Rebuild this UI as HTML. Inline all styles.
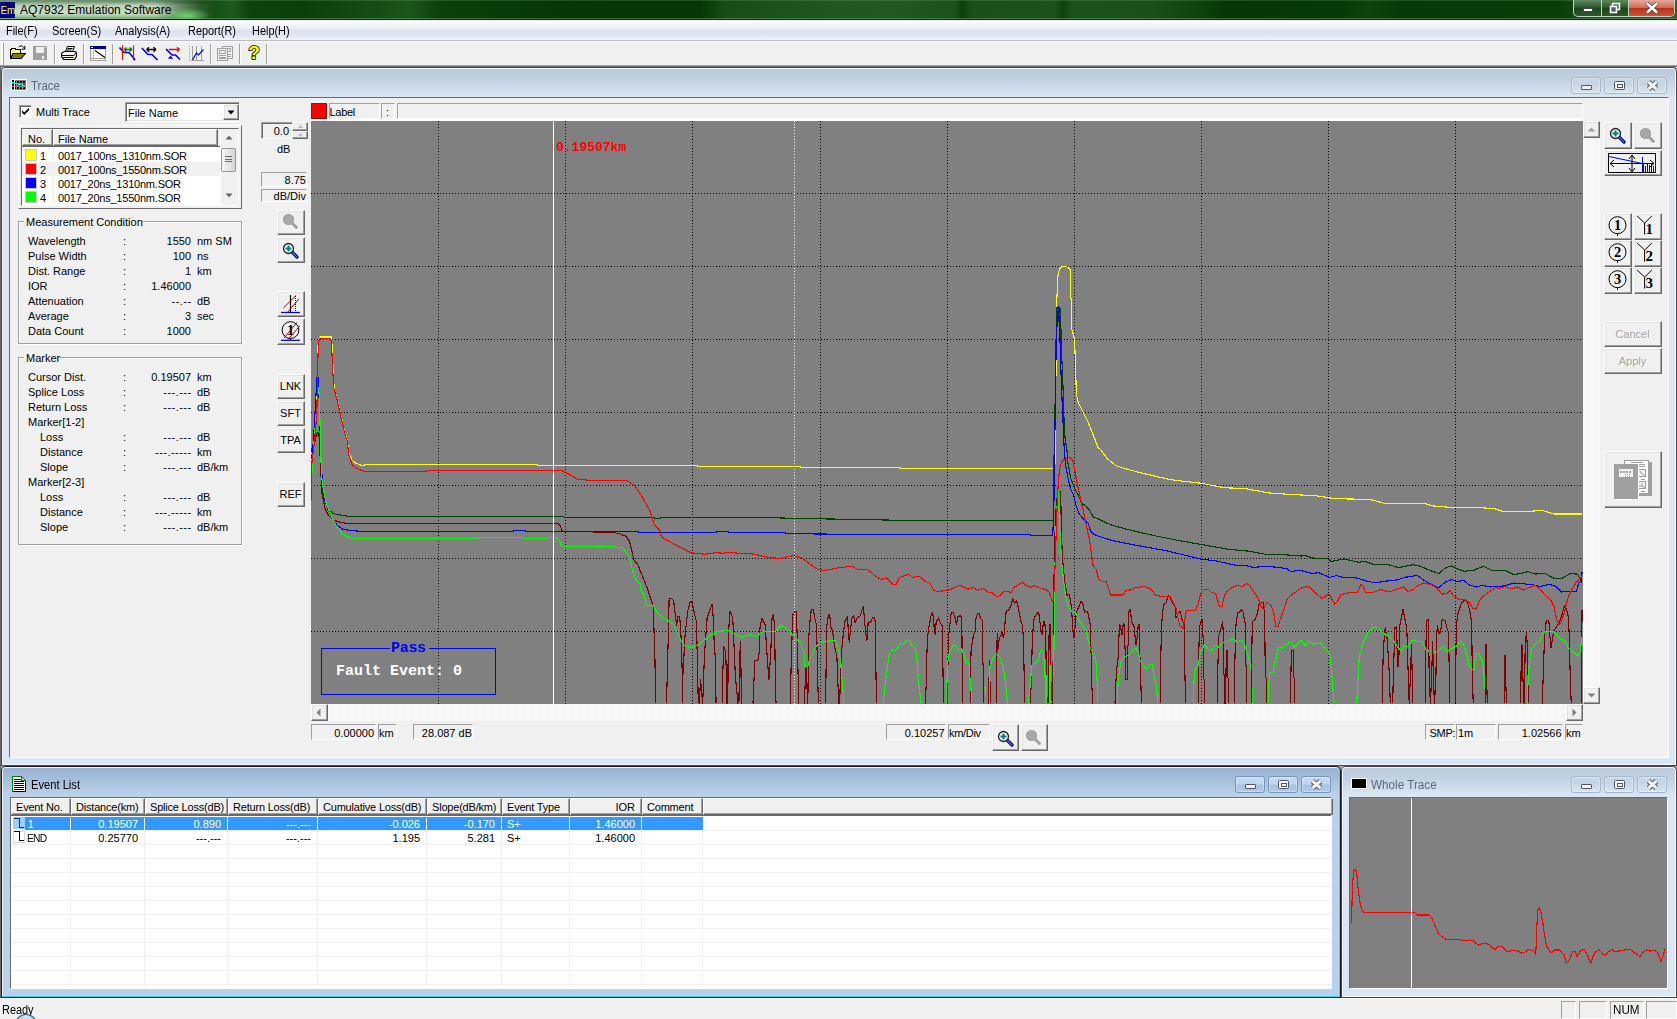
<!DOCTYPE html><html><head><meta charset="utf-8"><title>AQ7932 Emulation Software</title><style>
html,body{margin:0;padding:0;}
body{width:1677px;height:1019px;overflow:hidden;background:#f0f0f0;position:relative;
 font-family:"Liberation Sans",sans-serif;font-size:11px;color:#000;}
div,span,svg{position:absolute;box-sizing:border-box;}
.t{white-space:nowrap;line-height:13px;height:13px;}
.r{text-align:right;}
.c{text-align:center;}
.sunk{border:1px solid;border-color:#a0a0a0 #fff #fff #a0a0a0;}
.sunk2{border:1px solid;border-color:#a0a0a0 #fff #fff #a0a0a0;box-shadow:inset 1px 1px 0 #696969, inset -1px -1px 0 #e3e3e3;}
.btn{background:#f0f0f0;border:1px solid;border-color:#fff #696969 #696969 #fff;box-shadow:inset -1px -1px 0 #a0a0a0, inset 1px 1px 0 #e3e3e3;}
.grp{border:1px solid #a0a0a0;box-shadow:1px 1px 0 #fff, inset 1px 1px 0 #fff;}
.hdr{background:#f0f0f0;border:1px solid;border-color:#fff #696969 #696969 #fff;box-shadow:inset -1px -1px 0 #a0a0a0;}
.mdi{border-radius:7px 7px 0 0;}
.capbtn{border:1px solid #a9b9cd;border-radius:3px;background:linear-gradient(#c9d6e5,#c5d3e3 48%,#cbd9e8 52%,#d6e3f0);box-shadow:inset 0 0 0 1px rgba(255,255,255,.35);}
.capbtn.a{border-color:#7a93b8;background:linear-gradient(#c6daf1,#c0d5ee 48%,#a8c2e2 52%,#b2c9e7);}
.sg{transform:scaleX(.92);transform-origin:0 0;}
</style></head><body>
<div class="" style="left:0px;top:0px;width:1677px;height:20px;background:linear-gradient(90deg,#0c400c 0px,#0a3b0a 200px,#145014 215px,#1f5a1f 232px,#0d420d 250px,#0b3e0b 300px,#164d16 380px,#1c561c 410px,#0c3f0c 440px,#0a3c0a 480px,#073707 560px,#063606 700px,#174c17 725px,#205720 830px,#225922 890px,#1b511b 955px,#0c3f0c 962px,#1a4f1a 972px,#1b511b 1055px,#0d400d 1063px,#1b521b 1072px,#1a4f1a 1150px,#0e420e 1200px,#063606 1225px,#083908 1340px,#0d430d 1370px,#083908 1400px,#0a3c0a 1560px,#1d531d 1600px,#2d5f2d 1677px);"></div>
<div class="" style="left:0px;top:0px;width:1677px;height:1px;background:rgba(255,255,255,.12);"></div>
<div class="" style="left:0px;top:0px;width:215px;height:19px;background:linear-gradient(rgba(150,185,150,.55) 0%,rgba(205,225,205,.92) 30%,rgba(210,230,210,.95) 70%,rgba(150,200,150,.8) 100%);-webkit-mask-image:linear-gradient(90deg,#000 0,#000 72%,rgba(0,0,0,.5) 84%,transparent 100%);mask-image:linear-gradient(90deg,#000 0,#000 72%,rgba(0,0,0,.5) 84%,transparent 100%);"></div>
<div class="" style="left:160px;top:6px;width:56px;height:13px;background:radial-gradient(ellipse 24px 8px at 27px 10px,rgba(115,215,115,.95),rgba(100,200,100,.5) 55%,rgba(90,180,90,0) 100%);"></div>
<div class="" style="left:0px;top:18px;width:1677px;height:1px;background:rgba(120,160,120,.45);"></div>
<div class="" style="left:0px;top:19px;width:1677px;height:1px;background:#1d2b1d;"></div>
<div class="" style="left:0px;top:20px;width:1677px;height:1px;background:#e4eae4;"></div>
<div class="" style="left:0px;top:2px;width:15px;height:16px;background:#00008b;"></div>
<div class="t " style="left:0.5px;top:4px;color:#ffff00;font-size:10px;letter-spacing:-0.2px;">Em</div>
<div class="t " style="left:20px;top:3px;font-size:12px;line-height:14px;height:14px;">AQ7932 Emulation Software</div>
<div class="" style="left:1573px;top:0px;width:102px;height:17px;border:1px solid #c4d2c4;border-top:none;border-radius:0 0 5px 5px;background:linear-gradient(#5f8a5f,#2f5a2f 45%,#1a451a 50%,#2c582c);overflow:hidden;"><div style="left:54px;top:0;width:48px;height:17px;background:linear-gradient(#e7a79a,#cf6b57 45%,#b9321a 50%,#d0583c);border-left:1px solid #c4d2c4;"></div><div style="left:27px;top:0;width:1px;height:17px;background:#c4d2c4;"></div></div>
<div class="" style="left:1583px;top:8px;width:10px;height:4px;background:#fff;border:1px solid #444;border-radius:1px;"></div>
<svg style="left:1609px;top:2px" width="12" height="12" viewBox="0 0 12 12"><rect x="3.5" y="1.5" width="7" height="6" fill="none" stroke="#fff" stroke-width="1.6"/><rect x="1.5" y="4.5" width="6" height="6" fill="#466" stroke="#fff" stroke-width="1.6"/></svg>
<svg style="left:1645px;top:2px" width="14" height="12" viewBox="0 0 14 12"><path d="M2 1.5 L12 10.5 M12 1.5 L2 10.5" stroke="#444" stroke-width="4"/><path d="M2 1.5 L12 10.5 M12 1.5 L2 10.5" stroke="#fff" stroke-width="2.4"/></svg>
<div class="" style="left:0px;top:21px;width:1677px;height:19px;background:linear-gradient(#fdfdfe 0%,#e9ebf5 40%,#dcdfee 55%,#e3e6f2 75%,#f3f4fa 100%);"></div>
<div class="" style="left:0px;top:40px;width:1677px;height:1px;background:#b6bccc;"></div>
<div class="" style="left:0px;top:41px;width:1677px;height:1px;background:#ffffff;"></div>
<div class="t " style="left:6px;top:24px;font-size:12px;line-height:14px;height:14px;transform:scaleX(.91);transform-origin:0 0;">File(F)</div>
<div class="t " style="left:52px;top:24px;font-size:12px;line-height:14px;height:14px;transform:scaleX(.91);transform-origin:0 0;">Screen(S)</div>
<div class="t " style="left:115px;top:24px;font-size:12px;line-height:14px;height:14px;transform:scaleX(.91);transform-origin:0 0;">Analysis(A)</div>
<div class="t " style="left:188px;top:24px;font-size:12px;line-height:14px;height:14px;transform:scaleX(.91);transform-origin:0 0;">Report(R)</div>
<div class="t " style="left:252px;top:24px;font-size:12px;line-height:14px;height:14px;transform:scaleX(.91);transform-origin:0 0;">Help(H)</div>
<div class="" style="left:0px;top:42px;width:1677px;height:23px;background:#f0f0f0;"></div>
<div class="" style="left:1px;top:43px;width:2px;height:21px;background:#fff;"></div>
<div class="" style="left:3px;top:43px;width:1px;height:22px;background:#a0a0a0;"></div>
<div class="" style="left:54px;top:44px;width:1px;height:20px;background:#a0a0a0;"></div>
<div class="" style="left:55px;top:44px;width:1px;height:20px;background:#fff;"></div>
<div class="" style="left:83px;top:44px;width:1px;height:20px;background:#a0a0a0;"></div>
<div class="" style="left:84px;top:44px;width:1px;height:20px;background:#fff;"></div>
<div class="" style="left:112px;top:44px;width:1px;height:20px;background:#a0a0a0;"></div>
<div class="" style="left:113px;top:44px;width:1px;height:20px;background:#fff;"></div>
<div class="" style="left:210px;top:44px;width:1px;height:20px;background:#a0a0a0;"></div>
<div class="" style="left:211px;top:44px;width:1px;height:20px;background:#fff;"></div>
<div class="" style="left:239px;top:44px;width:1px;height:20px;background:#a0a0a0;"></div>
<div class="" style="left:240px;top:44px;width:1px;height:20px;background:#fff;"></div>
<div class="" style="left:266px;top:44px;width:1px;height:20px;background:#a0a0a0;"></div>
<div class="" style="left:267px;top:44px;width:1px;height:20px;background:#fff;"></div>
<svg style="left:10px;top:45px" width="16" height="15" viewBox="0 0 16 15" shape-rendering="crispEdges"><path d="M0.5 13.5 V4.5 H1.5 V3.5 H5.5 V4.5 H10.5 V8" fill="#ffff80" stroke="#000"/><path d="M0.5 13.5 L3 8.5 H15.5 L11 13.5 Z" fill="#808000" stroke="#000" stroke-width="1.1" shape-rendering="auto"/><path d="M8.5 2.2 C10 0.2 13.3 0.6 14.4 3.6 M14.8 0.8 V4.2 H11.6" fill="none" stroke="#000" shape-rendering="auto"/></svg>
<svg style="left:33px;top:46px" width="14" height="14" viewBox="0 0 14 14" shape-rendering="crispEdges"><rect x="0" y="0" width="14" height="14" fill="#a0a0a0"/><rect x="3" y="1" width="8" height="6" fill="#f0f0f0"/><rect x="4" y="9" width="7" height="5" fill="#a0a0a0"/><rect x="9" y="10" width="2" height="3" fill="#f0f0f0"/><rect x="12" y="1" width="1" height="1" fill="#f0f0f0"/></svg>
<svg style="left:61px;top:46px" width="16" height="15" viewBox="0 0 16 15"><path d="M4.5 5.5 L6.5 0.5 H13.5 L11.5 5.5" fill="#fff" stroke="#000"/><path d="M6.5 2.5 H11.5 M5.8 4 H10.5" stroke="#000"/><path d="M1.5 6.5 L3.5 5.5 H13.5 L15.5 6.5 V10.5 L13.5 13.5 H2.5 L0.5 10.5 V8 Z" fill="#fff" stroke="#000" stroke-width="1.2"/><path d="M1 9.5 H13 M13 9.5 L15 7 M2 11.5 H12.5" stroke="#000"/><rect x="7" y="10" width="3" height="1" fill="#ffff00"/></svg>
<svg style="left:90px;top:46px" width="16" height="15" viewBox="0 0 16 15" shape-rendering="crispEdges"><rect x="0.5" y="0.5" width="15" height="14" fill="#f0f0f0" stroke="#a0a0a0"/><rect x="0" y="0" width="16" height="3" fill="#000080"/><rect x="1" y="1" width="2" height="1" fill="#fff"/><path d="M1 12.5 H15" stroke="#a0a0a0"/><rect x="3" y="4" width="12" height="8" fill="#fff"/><path d="M3.5 4 V12" stroke="#c0c0c0"/><path d="M5 4.5 L15 11.5" stroke="#000" stroke-width="1.2" shape-rendering="auto"/></svg>
<svg style="left:119px;top:45px" width="17" height="17" viewBox="0 0 17 17"><path d="M0.5 2.5 L5 7.5 H10 L15.5 14" stroke="#0000ff" stroke-width="1.6" fill="none"/><path d="M3.5 0.5 V15 M14.5 0.5 V15" stroke="#ff0000" stroke-width="1.2"/><path d="M5 4.5 H13 M5 4.5 L7.5 2.5 M5 4.5 L7.5 6.5 M13 4.5 L10.5 2.5 M13 4.5 L10.5 6.5" stroke="#008000" stroke-width="1.3" fill="none"/><circle cx="15.5" cy="14.5" r="1" fill="#0000ff"/></svg>
<svg style="left:141px;top:46px" width="18" height="15" viewBox="0 0 18 15"><path d="M0.8 2 L7 8.5 H11 L16.5 14" stroke="#0000ff" stroke-width="1.7" fill="none"/><path d="M5.5 3.5 H15 M5.5 3.5 L8 1.3 M5.5 3.5 L8 5.7 M15 3.5 L12.5 1.3 M15 3.5 L12.5 5.7" stroke="#000" stroke-width="1.3" fill="none"/></svg>
<svg style="left:165px;top:46px" width="16" height="15" viewBox="0 0 16 15"><path d="M1 3 L7 9 H10.5 L15 13.5" stroke="#0000ff" stroke-width="1.7" fill="none"/><path d="M4 3.5 H14.5 M14.5 3.5 L12 1.3 M14.5 3.5 L12 5.7" stroke="#ff0000" stroke-width="1.3" fill="none"/><path d="M2.8 12.8 H8.2 L5.5 9.8 Z" fill="#0000ff"/></svg>
<svg style="left:188px;top:46px" width="16" height="15" viewBox="0 0 16 15" shape-rendering="crispEdges"><path d="M1.5 0 V15" stroke="#a0a0a0" stroke-dasharray="1 1"/><path d="M4.5 0 V14 M8.5 0 V14 M13.5 0 V14 M3 14.5 H16" stroke="#a0a0a0"/><path d="M4.5 14 L8.5 7 L10.5 9 L15.5 3.5" stroke="#0000ff" stroke-width="1.2" fill="none" shape-rendering="auto"/></svg>
<svg style="left:217px;top:46px" width="16" height="15" viewBox="0 0 16 15" shape-rendering="crispEdges"><rect x="5.5" y="0.5" width="10" height="12" fill="#f0f0f0" stroke="#a0a0a0"/><rect x="9.5" y="2.5" width="4" height="3" fill="none" stroke="#a0a0a0"/><path d="M11 8.5 H14 M11 10.5 H14" stroke="#a0a0a0"/><rect x="0.5" y="2.5" width="10" height="12" fill="#f0f0f0" stroke="#a0a0a0"/><rect x="2.5" y="4.5" width="6" height="3" fill="none" stroke="#a0a0a0"/><path d="M2 9.5 H9 M2 11.5 H9 M2 12.5 H9" stroke="#a0a0a0"/></svg>
<div class="t" style="left:247px;top:43px;width:14px;height:20px;line-height:20px;font-size:19px;font-weight:bold;color:#ffff00;text-align:center;-webkit-text-stroke:1.6px #000;paint-order:stroke fill;">?</div>
<div class="" style="left:1px;top:67px;width:1676px;height:931px;background:#ababab;"></div>
<div class="" style="left:0px;top:65px;width:1677px;height:1px;background:#a0a0a0;"></div>
<div class="" style="left:0px;top:66px;width:1677px;height:1px;background:#696969;"></div>
<div class="" style="left:0px;top:66px;width:1px;height:932px;background:#696969;"></div>
<div class="" style="left:1px;top:67px;width:1676px;height:699px;background:#474747;border-radius:5px 5px 0 0;"></div>
<div class="" style="left:2px;top:68px;width:1674px;height:697px;background:#f4f8fc;border-radius:4px 4px 0 0;"></div>
<div class="" style="left:2px;top:68px;width:1673px;height:696px;background:#eef3fa;border-radius:4px 4px 0 0;"></div>
<div class="" style="left:3px;top:69px;width:1672px;height:695px;background:#d9e6f3;border-radius:3px 3px 0 0;"></div>
<div class="" style="left:3px;top:69px;width:1672px;height:28px;background:linear-gradient(#bccbdc 0%,#c2d1e1 35%,#d1dfed 75%,#d9e6f3 100%);border-radius:3px 3px 0 0;"></div>
<div class="t " style="left:31px;top:79px;font-size:12px;line-height:14px;height:14px;color:#5e6577;transform:scaleX(0.957);transform-origin:0 0;">Trace</div>
<div class="capbtn" style="left:1571px;top:77px;width:30px;height:17px;"></div>
<div class="capbtn" style="left:1604px;top:77px;width:30px;height:17px;"></div>
<div class="capbtn" style="left:1637px;top:77px;width:30px;height:17px;"></div>
<div class="" style="left:1581px;top:85px;width:11px;height:5px;background:#f4f4f4;border:1px solid #4d5566;border-radius:1px;"></div>
<div class="" style="left:1614px;top:81px;width:11px;height:9px;background:#f4f4f4;border:1px solid #4d5566;border-radius:1.5px;"></div>
<div class="" style="left:1616.5px;top:83.5px;width:6px;height:4px;background:transparent;border:1px solid #4d5566;"></div>
<svg style="left:1646px;top:80px" width="13" height="11" viewBox="0 0 13 11"><path d="M2.5 2 L10.5 9 M10.5 2 L2.5 9" stroke="#4d5566" stroke-width="5" stroke-linecap="butt"/><path d="M2.5 2 L10.5 9 M10.5 2 L2.5 9" stroke="#f0f0f0" stroke-width="3" stroke-linecap="butt"/></svg>
<svg style="left:11px;top:79px" width="16" height="12" viewBox="0 0 16 12" shape-rendering="crispEdges"><rect width="16" height="12" fill="#fff"/><rect x="1" y="1" width="14" height="10" fill="#808080"/><g fill="#000"><rect x="1" y="1" width="2" height="3"/><rect x="4" y="2" width="1" height="2"/><rect x="6" y="2" width="2" height="2"/><rect x="9" y="2" width="2" height="2"/><rect x="12" y="2" width="2" height="2"/><rect x="1" y="5" width="2" height="2"/><rect x="4" y="5" width="1" height="2"/><rect x="6" y="5" width="2" height="2"/><rect x="9" y="5" width="2" height="2"/><rect x="12" y="5" width="2" height="2"/><rect x="1" y="8" width="2" height="2"/><rect x="4" y="8" width="1" height="2"/><rect x="6" y="8" width="2" height="2"/><rect x="9" y="8" width="2" height="2"/><rect x="12" y="8" width="2" height="2"/></g><rect x="3" y="1" width="1" height="10" fill="#fff"/><path d="M1 3.5 H3 L4 4.5 H7 L8 5.5 H11 L12 6.5 H14" stroke="#00ffff" fill="none" stroke-width="1.2"/><path d="M5 7 L6.5 5.2 L8 7 Z M10 9 L11.5 7.2 L13 9 Z" fill="#00ff00" shape-rendering="auto"/></svg>
<div class="" style="left:9px;top:97px;width:1660px;height:661px;background:#f0f0f0;border:1px solid;border-color:#6a6a6a #fff #fff #6a6a6a;"></div>
<div class="" style="left:19px;top:105px;width:13px;height:13px;background:#fff;border:1px solid;border-color:#a0a0a0 #fff #fff #a0a0a0;box-shadow:inset 1px 1px 0 #696969;"></div>
<svg style="left:21px;top:107px" width="9" height="9" viewBox="0 0 9 9"><path d="M1 3.2 L3.2 5.6 L8 0.8 L8 3.2 L3.2 8 L1 5.6 Z" fill="#000"/></svg>
<div class="t " style="left:36px;top:106px;">Multi Trace</div>
<div class="" style="left:125px;top:102px;width:115px;height:20px;background:#fff;border:1px solid;border-color:#a0a0a0 #fff #fff #a0a0a0;box-shadow:inset 1px 1px 0 #696969, inset -1px -1px 0 #e3e3e3;"></div>
<div class="t " style="left:128px;top:107px;">File Name</div>
<div class="btn" style="left:223px;top:104px;width:16px;height:16px;"></div>
<svg style="left:227px;top:110px" width="8" height="5" viewBox="0 0 8 5"><path d="M0.5 0.5 L7.5 0.5 L4 4.5 Z" fill="#000"/></svg>
<div class="" style="left:18px;top:125px;width:224px;height:84px;background:#f0f0f0;border:1px solid;border-color:#fff #696969 #696969 #fff;"></div>
<div class="" style="left:21px;top:128px;width:218px;height:78px;background:#fff;border:1px solid;border-color:#696969 #fff #fff #696969;"></div>
<div class="" style="left:22px;top:129px;width:198px;height:18px;background:#f0f0f0;"></div>
<div class="hdr" style="left:22px;top:129px;width:31px;height:17px;"></div>
<div class="hdr" style="left:53px;top:129px;width:165px;height:17px;"></div>
<div class="t " style="left:28px;top:133px;">No.</div>
<div class="t " style="left:58px;top:133px;">File Name</div>
<div class="" style="left:22px;top:146px;width:198px;height:1px;background:#696969;"></div>
<div class="" style="left:25px;top:149px;width:12px;height:12px;background:#ffff00;border:1px solid #c8c8c8;"></div>
<div class="t " style="left:40px;top:150px;">1</div>
<div class="t " style="left:58px;top:150px;letter-spacing:-0.22px;">0017_100ns_1310nm.SOR</div>
<div class="" style="left:22px;top:162px;width:198px;height:14px;background:#f0f0f0;"></div>
<div class="" style="left:25px;top:163px;width:12px;height:12px;background:#ff0000;border:1px solid #c8c8c8;"></div>
<div class="t " style="left:40px;top:164px;">2</div>
<div class="t " style="left:58px;top:164px;letter-spacing:-0.22px;">0017_100ns_1550nm.SOR</div>
<div class="" style="left:25px;top:177px;width:12px;height:12px;background:#0000ff;border:1px solid #c8c8c8;"></div>
<div class="t " style="left:40px;top:178px;">3</div>
<div class="t " style="left:58px;top:178px;letter-spacing:-0.22px;">0017_20ns_1310nm.SOR</div>
<div class="" style="left:25px;top:191px;width:12px;height:12px;background:#00ff00;border:1px solid #c8c8c8;"></div>
<div class="t " style="left:40px;top:192px;">4</div>
<div class="t " style="left:58px;top:192px;letter-spacing:-0.22px;">0017_20ns_1550nm.SOR</div>
<div class="" style="left:53px;top:147px;width:1px;height:58px;background:#f0f0f0;"></div>
<div class="" style="left:221px;top:129px;width:17px;height:76px;background:#f0f0f0;"></div>
<svg style="left:225px;top:135px" width="8" height="5" viewBox="0 0 8 5"><path d="M0.5 4.5 L4 0.8 L7.5 4.5 Z" fill="#606060"/></svg>
<svg style="left:225px;top:193px" width="8" height="5" viewBox="0 0 8 5"><path d="M0.5 0.5 L7.5 0.5 L4 4.2 Z" fill="#606060"/></svg>
<div class="" style="left:221px;top:148px;width:15px;height:24px;border:1px solid #979797;border-radius:2px;background:linear-gradient(90deg,#f6f6f6,#e6e6e6 50%,#d6d6d6);"></div>
<div class="" style="left:225px;top:156.0px;width:7px;height:1px;background:#6a6a6a;"></div>
<div class="" style="left:225px;top:158.5px;width:7px;height:1px;background:#6a6a6a;"></div>
<div class="" style="left:225px;top:161.0px;width:7px;height:1px;background:#6a6a6a;"></div>
<div class="grp" style="left:18px;top:221px;width:224px;height:123px;"></div>
<div class="" style="left:24px;top:216px;width:118px;height:13px;background:#f0f0f0;"></div>
<div class="t " style="left:26px;top:216px;">Measurement Condition</div>
<div class="t " style="left:28px;top:235px;">Wavelength</div>
<div class="t " style="left:123px;top:235px;">:</div>
<div class="t r" style="left:130px;top:235px;width:61px;">1550</div>
<div class="t " style="left:197px;top:235px;">nm SM</div>
<div class="t " style="left:28px;top:250px;">Pulse Width</div>
<div class="t " style="left:123px;top:250px;">:</div>
<div class="t r" style="left:130px;top:250px;width:61px;">100</div>
<div class="t " style="left:197px;top:250px;">ns</div>
<div class="t " style="left:28px;top:265px;">Dist. Range</div>
<div class="t " style="left:123px;top:265px;">:</div>
<div class="t r" style="left:130px;top:265px;width:61px;">1</div>
<div class="t " style="left:197px;top:265px;">km</div>
<div class="t " style="left:28px;top:280px;">IOR</div>
<div class="t " style="left:123px;top:280px;">:</div>
<div class="t r" style="left:130px;top:280px;width:61px;">1.46000</div>
<div class="t " style="left:197px;top:280px;"></div>
<div class="t " style="left:28px;top:295px;">Attenuation</div>
<div class="t " style="left:123px;top:295px;">:</div>
<div class="t r" style="left:130px;top:295px;width:61.5px;letter-spacing:0.45px;">--.--</div>
<div class="t " style="left:197px;top:295px;">dB</div>
<div class="t " style="left:28px;top:310px;">Average</div>
<div class="t " style="left:123px;top:310px;">:</div>
<div class="t r" style="left:130px;top:310px;width:61px;">3</div>
<div class="t " style="left:197px;top:310px;">sec</div>
<div class="t " style="left:28px;top:325px;">Data Count</div>
<div class="t " style="left:123px;top:325px;">:</div>
<div class="t r" style="left:130px;top:325px;width:61px;">1000</div>
<div class="t " style="left:197px;top:325px;"></div>
<div class="grp" style="left:18px;top:357px;width:224px;height:188px;"></div>
<div class="" style="left:24px;top:352px;width:36px;height:13px;background:#f0f0f0;"></div>
<div class="t " style="left:26px;top:352px;">Marker</div>
<div class="t " style="left:28px;top:371px;">Cursor Dist.</div>
<div class="t " style="left:123px;top:371px;">:</div>
<div class="t r" style="left:120px;top:371px;width:71px;">0.19507</div>
<div class="t " style="left:197px;top:371px;">km</div>
<div class="t " style="left:28px;top:386px;">Splice Loss</div>
<div class="t " style="left:123px;top:386px;">:</div>
<div class="t r" style="left:120px;top:386px;width:71.5px;letter-spacing:0.45px;">---.---</div>
<div class="t " style="left:197px;top:386px;">dB</div>
<div class="t " style="left:28px;top:401px;">Return Loss</div>
<div class="t " style="left:123px;top:401px;">:</div>
<div class="t r" style="left:120px;top:401px;width:71.5px;letter-spacing:0.45px;">---.---</div>
<div class="t " style="left:197px;top:401px;">dB</div>
<div class="t " style="left:28px;top:416px;">Marker[1-2]</div>
<div class="t " style="left:40px;top:431px;">Loss</div>
<div class="t " style="left:123px;top:431px;">:</div>
<div class="t r" style="left:120px;top:431px;width:71.5px;letter-spacing:0.45px;">---.---</div>
<div class="t " style="left:197px;top:431px;">dB</div>
<div class="t " style="left:40px;top:446px;">Distance</div>
<div class="t " style="left:123px;top:446px;">:</div>
<div class="t r" style="left:120px;top:446px;width:71.5px;letter-spacing:0.45px;">---.-----</div>
<div class="t " style="left:197px;top:446px;">km</div>
<div class="t " style="left:40px;top:461px;">Slope</div>
<div class="t " style="left:123px;top:461px;">:</div>
<div class="t r" style="left:120px;top:461px;width:71.5px;letter-spacing:0.45px;">---.---</div>
<div class="t " style="left:197px;top:461px;">dB/km</div>
<div class="t " style="left:28px;top:476px;">Marker[2-3]</div>
<div class="t " style="left:40px;top:491px;">Loss</div>
<div class="t " style="left:123px;top:491px;">:</div>
<div class="t r" style="left:120px;top:491px;width:71.5px;letter-spacing:0.45px;">---.---</div>
<div class="t " style="left:197px;top:491px;">dB</div>
<div class="t " style="left:40px;top:506px;">Distance</div>
<div class="t " style="left:123px;top:506px;">:</div>
<div class="t r" style="left:120px;top:506px;width:71.5px;letter-spacing:0.45px;">---.-----</div>
<div class="t " style="left:197px;top:506px;">km</div>
<div class="t " style="left:40px;top:521px;">Slope</div>
<div class="t " style="left:123px;top:521px;">:</div>
<div class="t r" style="left:120px;top:521px;width:71.5px;letter-spacing:0.45px;">---.---</div>
<div class="t " style="left:197px;top:521px;">dB/km</div>
<div class="" style="left:261px;top:122px;width:32px;height:17px;background:#f0f0f0;border:1px solid;border-color:#a0a0a0 #fff #fff #a0a0a0;box-shadow:inset 1px 1px 0 #696969;"></div>
<div class="t r" style="left:262px;top:125px;width:27px;">0.0</div>
<div class="btn" style="left:292px;top:122px;width:16px;height:9px;"></div>
<div class="btn" style="left:292px;top:131px;width:16px;height:8px;"></div>
<svg style="left:298px;top:125px" width="5" height="3" viewBox="0 0 5 3"><path d="M0 3 L2.5 0 L5 3 Z" fill="#b8b8b8"/></svg>
<svg style="left:298px;top:134px" width="5" height="3" viewBox="0 0 5 3"><path d="M0 0 L5 0 L2.5 3 Z" fill="#b8b8b8"/></svg>
<div class="t " style="left:277px;top:143px;">dB</div>
<div class="sunk" style="left:261px;top:172px;width:46px;height:15px;"></div>
<div class="t r" style="left:262px;top:174px;width:44px;">8.75</div>
<div class="sunk" style="left:261px;top:189px;width:46px;height:13px;"></div>
<div class="t r" style="left:262px;top:190px;width:44px;">dB/Div</div>
<div class="btn" style="left:277px;top:374px;width:28px;height:25px;"></div>
<div class="t c" style="left:277px;top:380px;width:27px;">LNK</div>
<div class="btn" style="left:277px;top:401px;width:28px;height:25px;"></div>
<div class="t c" style="left:277px;top:407px;width:27px;">SFT</div>
<div class="btn" style="left:277px;top:428px;width:28px;height:25px;"></div>
<div class="t c" style="left:277px;top:434px;width:27px;">TPA</div>
<div class="btn" style="left:277px;top:482px;width:28px;height:25px;"></div>
<div class="t c" style="left:277px;top:488px;width:27px;">REF</div>
<div class="btn" style="left:277px;top:210px;width:28px;height:25px;"></div>
<div class="btn" style="left:277px;top:237px;width:28px;height:26px;"></div>
<div class="btn" style="left:277px;top:291px;width:28px;height:26px;"></div>
<div class="btn" style="left:277px;top:318px;width:28px;height:27px;"></div>
<svg style="left:282px;top:213px" width="17" height="17" viewBox="0 0 17 17"><path d="M10.5 10.5 L15.5 15.5" stroke="#fff" stroke-width="3" stroke-linecap="round"/><path d="M9.5 9.5 L14.5 14.5" stroke="#a0a0a0" stroke-width="3" stroke-linecap="round"/><circle cx="6.5" cy="6.5" r="5" fill="#a8a8a8" stroke="#a0a0a0" stroke-width="1.2"/></svg>
<svg style="left:282px;top:242px" width="17" height="17" viewBox="0 0 17 17"><path d="M9.5 9.5 L15 15" stroke="#000080" stroke-width="3.2" stroke-linecap="round"/><path d="M10 10 L14.8 14.8" stroke="#5a78e0" stroke-width="1.2" stroke-linecap="round"/><circle cx="6.5" cy="6.5" r="5" fill="#e8f4f4" stroke="#222" stroke-width="1.3"/><path d="M6.5 3.5 V9.5 M3.5 6.5 H9.5" stroke="#008080" stroke-width="2"/></svg>
<svg style="left:277px;top:291px" width="28" height="26" viewBox="0 0 28 26"><path d="M4 21.5 H23" stroke="#0000ff" stroke-width="1.3"/><path d="M13.5 4 V22" stroke="#000" stroke-width="1.2"/><path d="M18.5 5 V22" stroke="#000" stroke-width="1" stroke-dasharray="1 1"/><path d="M6.4 17 L19.2 4.3 M10 22 L22 7.8" stroke="#a00000" stroke-width="1"/></svg>
<svg style="left:277px;top:318px" width="28" height="27" viewBox="0 0 28 27"><circle cx="13.5" cy="12.1" r="8.4" fill="none" stroke="#000" stroke-width="1"/><path d="M13.5 20.5 V22" stroke="#000"/><text x="13.5" y="17" font-family="Liberation Serif" font-weight="bold" font-size="14.5" text-anchor="middle" fill="#000">1</text><path d="M4 22.3 H23" stroke="#0000ff" stroke-width="1.3"/><path d="M7.1 20 L20 4.3 M10.7 22 L22.8 7.9" stroke="#a00000" stroke-width="1"/></svg>
<div class="" style="left:311px;top:103px;width:16px;height:16px;background:#ff0000;border:1px solid;border-color:#c00000 #900000 #900000 #c00000;"></div>
<div class="sunk" style="left:329px;top:103px;width:51px;height:16px;"></div>
<div class="t " style="left:329.5px;top:106px;letter-spacing:-0.3px;">Label</div>
<div class="sunk" style="left:381px;top:103px;width:14px;height:16px;"></div>
<div class="t " style="left:386px;top:106px;">:</div>
<div class="sunk" style="left:397px;top:103px;width:1186px;height:16px;"></div>
<div class="" style="left:311px;top:119px;width:1272px;height:2px;background:#fff;"></div>
<svg style="left:311px;top:121px" width="1272" height="583" viewBox="0 0 1272 583" shape-rendering="crispEdges"><rect width="1272" height="583" fill="#808080"/><path d="M127.5 0V583M254.5 0V583M381.5 0V583M509.5 0V583M636.5 0V583M763.5 0V583M890.5 0V583M1017.5 0V583M1144.5 0V583" stroke="#000" stroke-width="1" stroke-dasharray="1 2" fill="none"/><path d="M0 72.5H1272M0 145.5H1272M0 218.5H1272M0 291.5H1272M0 364.5H1272M0 437.5H1272M0 510.5H1272" stroke="#000" stroke-width="1" stroke-dasharray="1 2" fill="none"/><path d="M483.5 0V583" stroke="#fff" stroke-width="1" stroke-dasharray="1 2" fill="none"/><polyline points="0,342.7 2.2,321.5 3.4,312 4.6,298 5.8,269.7 7,225 8.1,217.9 9.3,216 20.4,216 21.6,232 22.3,255.5 23.5,269.7 25.8,276.8 29.3,292 31.7,302.7 34,312 36.4,319 37.6,331 41.1,339.2 44.7,342 50.5,344.4 55,343.7 226,343.7 227,344.6 386,344.6 387,345.5 489,345.5 490,346.5 589,346.5 590,347.4 743.6,347.4 744.6,333 745.1,219 745.5,187.3 746,175 746.8,155.5 748.2,149.3 749.5,146.7 751.3,145.3 754.8,145.3 757.4,146.7 759.2,148.4 759.6,155.5 759.7,176.7 760.5,178.4 760.6,207.6 762.3,213.8 763.6,219.4 764.6,247.9 765.4,273.5 767.4,282 771.7,290.6 777.4,302 783,316.2 787.3,327 789,327.8 796,337.5 804.9,344.6 815.5,348.1 833.1,352.6 859.6,358.7 890.5,362.3 912.6,366.7 933.8,367.6 958.5,372 983.3,373.7 1004.4,374.6 1024,377.7 1059.3,378.4 1073.5,382.4 1113.5,382.4 1120.6,384.8 1137,386.2 1165.3,386.2 1184.2,387.9 1191.2,390.2 1219.5,390.2 1231.3,389.5 1243,393 1271,393" fill="none" stroke="#ffff00" stroke-width="1.15" stroke-linejoin="round"/><polyline points="0,331 2,324 6,312 8,312 9.3,340 10.5,364 12.9,378 17.6,388.7 22.3,392.7 29.3,394 37.6,395.3 252.3,395.3 253.5,396.4 343,396.4 344,397.2 349,397.2 350,396.4 449,396.4 489,397.5 549,398.5 589,399.3 742.6,399.3 743.2,319 744.4,270.7 745,224 745.5,187 749,187 749.2,202 749.9,202.5 750,219.4 751.7,256.4 753.2,304.8 754.6,323.3 755.5,323.9 757,342.6 759.8,357.5 763.5,366.9 767.3,374.3 771,382.7 774.7,384.6 778.5,389.3 782.2,395.8 788.7,398.6 794.3,401.4 799.6,403.8 815.5,408.2 842,414.4 868.5,419.7 890.5,423.5 916.2,428.1 939.1,430.3 955,433.4 974.4,433.8 990.3,435 993.9,434.3 1000.9,437 1016.8,437.7 1020.3,440.5 1024,439.7 1033.4,438 1047.6,441.3 1053.4,440.4 1064,443.9 1075.8,443.2 1087.6,446.7 1101.7,443.7 1108.8,445.1 1118.2,449.1 1127.6,452.6 1134.7,446.7 1140.6,444.9 1146.5,447.9 1153.5,450.3 1163,449.1 1172.4,445.1 1181.8,449.8 1193.6,449.1 1203,453.8 1217.1,450.7 1224.2,453.1 1233.6,452.2 1243,457.3 1250.1,457.8 1259.5,452.6 1266.6,453.1 1271,462" fill="none" stroke="#004000" stroke-width="1.15" stroke-linejoin="round"/><polyline points="0,338 2,329 5,316 6,314.5 8,314.5 9.3,336 11,373 14,387.5 17.6,394.6 22.3,398.8 28.2,401 35.2,402.3 247,402.4 248.8,403.8 251.4,410.5 300.9,411.2 307.9,412.6 315,415.2 318.5,420.5 323,439 327.4,444.4 329,449.3 334.3,462 338.7,474.3 342.2,485 344,539.7 344.5,582.5" fill="none" stroke="#800000" stroke-width="1.15" stroke-linejoin="round"/><polyline points="355.5,582.5 357.3,515 358.1,477.9 359.9,477 362.6,479.6 364.3,493.8 365.6,504.4 367,495.5 368.7,495.5 370,515 371.4,555.6 371.2,582.5" fill="none" stroke="#800000" stroke-width="1.15" stroke-linejoin="round"/><polyline points="371.6,582.5 371.8,555.6 374,515 376.7,490.2 379.3,480.2 381.1,481.4 383.7,493.8 385.5,500.8 386.4,541.5 387.3,582.5" fill="none" stroke="#800000" stroke-width="1.15" stroke-linejoin="round"/><polyline points="388.2,582.5 389.6,558.2 390.5,569.7 391.7,582.5 393.5,532.6 396.1,497.3 398.8,489.4 401,483.2 402.3,497.3 403.2,522 404.6,541.5 405,582.5" fill="none" stroke="#800000" stroke-width="1.15" stroke-linejoin="round"/><polyline points="411.1,582.5 411.6,555.6 412.9,525.6 414.7,530.9 415.5,559 416,582.5 416.8,582.5 417.3,515 419,490.2 421.7,496.4 422.6,515 424.4,555.6 427,582.5" fill="none" stroke="#800000" stroke-width="1.15" stroke-linejoin="round"/><polyline points="427.9,582.5 428.8,532.6 429.7,521 430,553.8 430.9,582.5" fill="none" stroke="#800000" stroke-width="1.15" stroke-linejoin="round"/><polyline points="442,582.5 443.8,539.7 447,538.8 448.2,530.9 449,506 450.9,497.3 454.4,504.4 455.3,523.8 457.9,558.2 458.8,546.7 460,525.6 461,497.3 462.3,494 463.6,504.4 464.1,539.7 465,582.5" fill="none" stroke="#800000" stroke-width="1.15" stroke-linejoin="round"/><polyline points="479.1,582.5 480.5,532.6 481.8,493.8 484,490.6 485.3,490.2 486.2,515 487,550.3 487.9,582.5" fill="none" stroke="#800000" stroke-width="1.15" stroke-linejoin="round"/><polyline points="493.2,582.5 494.1,564.4 495,545.9 495.9,564.4 496.8,582.5 497.7,518.5 498.5,504.4 500.3,488.5 502.4,488.5 503.8,497.3 505.6,504.4 506.5,550.3 507.4,582.5" fill="none" stroke="#800000" stroke-width="1.15" stroke-linejoin="round"/><polyline points="514.4,582.5 515,553.8 515.8,504.4 517.6,493.4 518.8,493.8 519.7,506 521.5,509.7 523.3,523.8 525.9,536.2 526.8,559 527.7,582.5 528.6,582.5 530.3,532.6 532.1,515 533.9,500.8 536.5,495.5 537.4,511.4 538.3,521.7 539.2,511.4 540.9,497.3 542.7,494.7 544.1,501.7 546.2,496.4 548.9,495.5 550.6,490.2 552.4,485.3 553.6,500.8 555,513.2 555.9,519.4 557.2,500.8 559.5,501.7 561.6,496.4 563.4,496.4 564.3,500.8 564.8,543.2 565.5,582.5" fill="none" stroke="#800000" stroke-width="1.15" stroke-linejoin="round"/><polyline points="614.3,582.5 615.2,564 615.9,532.6 616.7,515 618.2,504.4 619.9,495.5 621.3,491.6 622.6,497.3 623.5,512.3 624.3,513.2 625.2,500.8 627.5,497 629.6,502.6 631.4,505.3 631.9,545 632.6,582.5" fill="none" stroke="#800000" stroke-width="1.15" stroke-linejoin="round"/><polyline points="636.2,582.5 636.7,554 637.6,515 638.8,504.4 640.2,492 642,491.6 643.8,495.5 645.5,503.5 646.9,495.5 649.9,494.7 650.8,500.8 651.2,539.7 651.7,582.5" fill="none" stroke="#800000" stroke-width="1.15" stroke-linejoin="round"/><polyline points="659.1,582.5 659.7,555.6 660,530.9 662.3,515 664.1,510.5 665,497.3 666.4,492.9 668.1,492.4 669.4,497.3 671.1,499 671.7,539.7 672.6,548.5 672.9,582.5" fill="none" stroke="#800000" stroke-width="1.15" stroke-linejoin="round"/><polyline points="677.3,582.5 678.6,539.7 679,564 679.5,582.5" fill="none" stroke="#800000" stroke-width="1.15" stroke-linejoin="round"/><polyline points="685.3,582.5 685.6,548.5 686.2,512.3 686.7,530.9 687.4,522 688.8,516.7 691.1,511.4 692.3,516.7 693.2,512.3 694.1,500.8 695.3,489.4 697.6,489.4 699.9,484.9 701.7,477.5 703.5,482.3 705.6,479.6 707.3,486.7 710,500.8 711.2,503.5 712.3,515 713,545 713.7,582.5" fill="none" stroke="#800000" stroke-width="1.15" stroke-linejoin="round"/><polyline points="719.5,582.5 720.6,545 721.5,515 722.9,499 724.1,495.5 726.4,492 727.7,491.6 728.9,500.8 730.3,512.3 731.2,513.2 732.4,500.8 733.8,500.5 734.7,515 735.2,545 736.1,582.5" fill="none" stroke="#800000" stroke-width="1.15" stroke-linejoin="round"/><polyline points="737.4,582.5 738.2,503.5 739.1,503.5 739.5,543.2 740.5,582.5 741.2,582.5 742.1,540.6 743,456.7 744.1,409 745.5,379 747.7,370.6 749.2,370.6 749.9,383.7 750.5,413.5 751.4,435.9 752.9,452.7 754.2,464 755.9,474.3 758.2,473.5 760,483.2 761.2,497.3 762.1,511.4 763,517 764.2,504.4 765.3,492 767.4,486.7 770,480.5 771.8,482.3 773.6,491.1 776.6,490.2 778,497.3 779.4,504.4 780.1,532.6 780.8,564.4 781.9,582.5" fill="none" stroke="#800000" stroke-width="1.15" stroke-linejoin="round"/><polyline points="804,582.5 804.7,563.5 805.9,546.3 807.3,535 808,515 808.6,503.4 809.8,506.2 810.5,513.4 811.5,513.4 812.2,502 813,503.4 813.6,517.7 814.3,532 814.8,558.5 816.2,558.5 816.5,526.3 817.3,523.4 817.9,490.5 818.8,488.4 819.5,489 820.5,500.5 821.9,503.4 823.1,505.5 824.1,516.3 824.8,523.4 825.5,523.4 826.5,512 827.4,503.4 828.4,503.4 828.8,532 829.5,549.2 830.1,570.6 830.5,582.5" fill="none" stroke="#800000" stroke-width="1.15" stroke-linejoin="round"/><polyline points="849.1,582.5 849.5,549.2 850.5,506.2 851.5,491.9 852.7,483.3 854.8,482.6 856.3,477.6 857.7,474.8 858.8,476.2 860.6,480.5 862.7,483.3 864.1,486.2 864.8,496.2 865.9,496.2 867,491.9 869.1,490.5 870.6,496.2 871.3,500.5 873.1,502 873.7,543.5 874.6,582.5" fill="none" stroke="#800000" stroke-width="1.15" stroke-linejoin="round"/><polyline points="887.3,582.5 887.7,535 888.5,506.2 889.9,500.5 891,498.4 891.6,510.5 892.3,517.7 892.8,557.8 893.5,559.2 893.8,582.5" fill="none" stroke="#800000" stroke-width="1.15" stroke-linejoin="round"/><polyline points="906.4,582.5 906.8,547.7 907.8,514.8 909.2,509.1 910.6,505.5 911.6,500.5 912.1,509.1 912.4,547.7 913.5,557.8 913.8,582.5 914.5,582.5 914.9,557.8 915.4,529.1 916.4,529.1 916.4,555.6 917.4,557.8 917.8,582.5" fill="none" stroke="#800000" stroke-width="1.15" stroke-linejoin="round"/><polyline points="923.5,582.5 923.8,543.5 924.7,506.2 925.7,499 926.7,491.9 928.5,491.2 930.4,488.4 932.1,491.2 933.3,497.7 934.3,503.4 934.7,543.5 935.4,546.3 935.7,582.5" fill="none" stroke="#800000" stroke-width="1.15" stroke-linejoin="round"/><polyline points="940.3,582.5 940.7,535 941.4,500.5 943.6,499.1 945.7,494.8 947.1,489 948.1,483.3 950,481.9 952.1,481.6 952.6,488.4 953.6,489 954.3,554.9 955.3,557.8 955.7,582.5" fill="none" stroke="#800000" stroke-width="1.15" stroke-linejoin="round"/><polyline points="979.3,582.5 979.8,556.3 980.5,529.1 982.2,529.1 982.6,556.3 983.3,557.8 983.6,582.5" fill="none" stroke="#800000" stroke-width="1.15" stroke-linejoin="round"/><polyline points="1071.1,582.5 1072.3,528 1074.2,506.8 1076.3,518.6 1078.2,551.5 1079.3,582.5" fill="none" stroke="#800000" stroke-width="1.15" stroke-linejoin="round"/><polyline points="1081.7,582.5 1082.4,551.5 1084,506.8 1085.7,505.6 1086.4,545.7 1087.6,545.7 1088.8,504.4 1090.7,495 1092.1,488.4 1093.5,496.2 1095.8,506.8 1097,546.8 1098.2,582.5 1099.4,556.3 1100.5,523.3 1101.2,554 1101.7,582.5" fill="none" stroke="#800000" stroke-width="1.15" stroke-linejoin="round"/><polyline points="1114.2,582.5 1114.7,542 1115.4,499.7 1117.5,498.6 1118.2,556.3 1119.4,582.5 1120.6,556.3 1121.7,520.9 1122.4,554 1123.4,582.5 1124.8,561 1125.7,513.9 1126.4,504.4 1127.6,512.7 1129.5,511.5 1131.2,498 1134.2,499.7 1135.9,506.8 1137.5,511.5 1138.2,546.8 1138.9,582.5" fill="none" stroke="#800000" stroke-width="1.15" stroke-linejoin="round"/><polyline points="1144.1,582.5 1144.8,546.8 1145.3,504.4 1146.9,492.7 1150,483.2 1152.4,479.7 1154.7,478.5 1157.1,483.2 1159.4,492.7 1160.6,502.1 1161.3,549.2 1162.2,582.5" fill="none" stroke="#800000" stroke-width="1.15" stroke-linejoin="round"/><polyline points="1174.3,582.5 1175,523.3 1175.4,554 1176.4,582.5" fill="none" stroke="#800000" stroke-width="1.15" stroke-linejoin="round"/><polyline points="1193.1,582.5 1194,533.9 1194.7,558.6 1195.5,582.5" fill="none" stroke="#800000" stroke-width="1.15" stroke-linejoin="round"/><polyline points="1209.6,582.5 1210.5,523.3 1211.2,524.5 1211.9,556.3 1213.1,582.5 1213.6,561 1214.3,520.9 1215.5,512 1216.4,525.6 1217.1,553.9 1217.8,582.5" fill="none" stroke="#800000" stroke-width="1.15" stroke-linejoin="round"/><polyline points="1231.3,582.5 1232.4,549.2 1233.6,513.9 1235.3,499.7 1237.8,499.2 1238.8,513.9 1240,526.8 1241.4,518.6 1243,509.2 1246.6,504.4 1248.9,499.7 1251.3,492.7 1253.6,484.4 1255.3,488 1257.2,495 1258.3,513.9 1259,546.8 1260.2,582.5" fill="none" stroke="#800000" stroke-width="1.15" stroke-linejoin="round"/><polyline points="1270.1,582.5 1270.8,536 1271,489" fill="none" stroke="#800000" stroke-width="1.15" stroke-linejoin="round"/><polyline points="0,354 1,340 3,309 5,274 6.3,253 7.5,259 8.6,293 10,340 11.7,364 14,380.4 17.6,389.9 22.3,399.3 27,405.2 31.7,408.2 38.8,409.4 50.5,410.4 202,410.4 203,409.4 214,409.4 215,410.5 327,410.5 328,411.3 405,411.3 406,410.5 417,410.5 418,411.3 473,411.3 475,412.2 501,412.2 503,413 569,413.4 719,413.4 720,414.3 741.8,414.4 743,379 744,304.8 745.3,215 746.5,199 747.3,186 747.8,186 748.2,206.7 749.3,225 750.3,262 751.7,293.4 753.2,327.6 754.6,344.7 757.4,358.9 759.8,368.7 762.6,374.3 765.4,385.5 768.2,393 772.9,398.6 777.2,402.3 779.4,409.8 783.1,413.5 790.6,416.3 803.1,420 824.3,424.1 856.1,429.9 890.5,438.2 905.6,440 925,444.4 935.6,444.8 942.6,446.5 953.2,445.3 969.1,446.5 976.2,447.9 979.7,450.6 988.6,449.3 1000.9,452.3 1008,451.8 1018.6,456.4 1025.6,454.6 1031,456.2 1045.2,456.9 1054.6,459.7 1064,462 1073.5,460.2 1085.2,459.2 1094.7,456.2 1106.4,454.5 1113.5,459.7 1118.2,462 1127.6,466.8 1134.7,460.9 1140.6,458.5 1146.5,460.9 1152.4,459.2 1158.2,463.9 1165.3,466 1171.2,464.4 1179.4,466 1193.6,464.9 1203,462 1212.4,462.8 1221.8,463.9 1228.9,465.6 1238.3,463.2 1245.4,465.6 1250.1,471 1259.5,470.3 1265.4,470.3 1267.8,462 1270.8,459.7 1271,450.7" fill="none" stroke="#0000ff" stroke-width="1.15" stroke-linejoin="round"/><polyline points="0,381 0.5,361 2.2,331 4.6,300 6,279 7.4,267 8.6,276.8 9.3,316.8 10.5,354.5 12.4,368.7 15.2,382.8 18.7,391 22.3,399.3 25.8,406.4 30.5,412.2 35.2,415.3 41.1,417.4 163,417.4 164,416.5 166.7,416.5 168,417.4 170,416.5 210.8,416.5 212.6,417.4 235.5,417.4 236.4,416.5 245.2,416.5 248.8,419.7 250.5,425.5 287.6,425.5 289,426.4 290.5,425.5 299,425.5 300.5,426.4 302,425.5 305,426.4 311.5,426.4 318.5,435.6 321.2,448 325.6,460.3 329,462 330,470 333.5,474.4 335.3,484 342.4,484.5 346.7,492.9 355.5,499 361.7,502.6 367,513.2 373.2,524.7 380.2,526.4 387.3,523.8 392.6,519.4 399.6,514.1 406.7,510.5 417.3,509.3 424.4,513.2 430.5,516.4 438.5,513.5 445.6,515.5 452.6,510 463.2,511 470.3,504.4 477.3,508.8 482.6,515.8 489.7,522 493.2,532.6 494.1,545.9 496.8,545.9 498.5,538 503.8,527.3 508.2,521.7 514.4,520.3 523.3,519.4 527.7,527.3 529.4,539.7 531.2,559 533,582.5" fill="none" stroke="#00ff00" stroke-width="1.15" stroke-linejoin="round"/><polyline points="572.2,582.5 574,564.4 576.7,543.2 578.4,532.6 582,528.7 584.6,529.4 589,523.8 593.4,522 597,518.5 598.7,519.4 600.5,523.8 604,526.4 605.8,536.2 606.7,550.3 608.4,568 610.2,582.5" fill="none" stroke="#00ff00" stroke-width="1.15" stroke-linejoin="round"/><polyline points="635.3,582.5 635.8,566 636.7,541.5 638.5,530.9 642,524.7 645.5,524.7 647.3,529.1 650.8,527.7 653.5,536.2 656.1,541.5 657.9,541.5 658.8,555.6 660,568 660.5,582.5" fill="none" stroke="#00ff00" stroke-width="1.15" stroke-linejoin="round"/><polyline points="674,566 674.5,575" fill="none" stroke="#00ff00" stroke-width="1.15" stroke-linejoin="round"/><polyline points="678.2,582.5 679,545 681.7,537.9 684.4,533.5 687.9,534.7 690.6,541.5 692.3,545 694.1,559 695.9,576.8 696.7,582.5" fill="none" stroke="#00ff00" stroke-width="1.15" stroke-linejoin="round"/><polyline points="717,582.5 718.8,568 719.7,559 720.6,545 725,541.5 727.7,539.7 729.4,530 732,530 733.8,545 734.7,582.5" fill="none" stroke="#00ff00" stroke-width="1.15" stroke-linejoin="round"/><polyline points="735.6,582.5 735.8,554" fill="none" stroke="#00ff00" stroke-width="1.15" stroke-linejoin="round"/><polyline points="738.2,582.5 738.4,544 739.1,544 740,582.5" fill="none" stroke="#00ff00" stroke-width="1.15" stroke-linejoin="round"/><polyline points="742.7,554.7 743.5,470.8 744.5,419 745.8,389 747.1,369.7 748.2,393 749.2,417.3 750.5,439.7 752.3,456.5 754.2,473.3 757,484.5 760.7,490 764.7,492 770,502.6 775.3,510.5 778.9,525.6 781.5,530.9 782.4,536.2 784.7,536.2 785.6,550.3 786.5,568 786.8,582.5" fill="none" stroke="#00ff00" stroke-width="1.15" stroke-linejoin="round"/><polyline points="806.2,582.5 806.5,570 807.6,556.3 809,546.3 811.2,536.3 813.3,536 815.5,534.6 818.3,534.6 820.5,529.9 824.1,527.4 826.2,528.4 827.6,532 828.8,539.2 830.5,542 832.6,544.9 834.8,547.7 836.9,547 839.1,543.5 841.2,543.5 842.2,549.2 843.4,556.3 844.8,562.1 845.8,568 846.5,582.5" fill="none" stroke="#00ff00" stroke-width="1.15" stroke-linejoin="round"/><polyline points="882.3,582.5 882.7,568 883.5,550.6 884.6,547.7 886.3,547 887.5,542.7 889.2,532 890.6,529.1 892,527 893.5,523.4 895.6,526.3 898.5,529.4 901.3,529.1 903.5,524.1 905.6,524.6 906.6,527.7 908.5,524.9 911.4,522.7 913.5,520.3 917.8,520.3 920.7,517.7 923.5,519.1 926.4,521.3 928.5,519.4 931.4,519.4 933.3,523.4 935,529.1 937.1,534.9 939,542 939.6,549.2" fill="none" stroke="#00ff00" stroke-width="1.15" stroke-linejoin="round"/><polyline points="941.4,567 941.4,582.5" fill="none" stroke="#00ff00" stroke-width="1.15" stroke-linejoin="round"/><polyline points="957.2,582.5 957.6,566 958.6,551.3 962.2,551.3 963.6,543.5 965.7,534.9 967.6,527 970,526.3 972.2,527.4 974.3,524.1 978.6,521.3 980.8,521.7 982.9,526.3 985.8,523.4 990.8,519.1 992.2,522.7 994.4,524.6 996.5,520.6 999.4,520.3 1001.5,523.4 1005.1,522.3 1010.1,522 1012.3,525.6 1015.1,529.1 1018,532 1019.4,537.7 1020.6,549.2 1021.6,563.5 1022.6,577 1023.4,582.5" fill="none" stroke="#00ff00" stroke-width="1.15" stroke-linejoin="round"/><polyline points="1045.7,582.5 1046.8,561 1048.3,535 1052.3,520.9 1057,511.5 1061.7,506.8 1066.4,506.3 1071.1,511.5 1077,515 1081.7,518.6 1086.4,525.6 1089.9,530.3 1093.5,524.5 1097,525.6 1101.7,518.6 1106.4,520.9 1111.1,520.9 1114.7,528 1118.2,530.3" fill="none" stroke="#00ff00" stroke-width="1.15" stroke-linejoin="round"/><polyline points="1122.9,531.5 1127.6,530.3 1132.3,525.2 1135.9,530.3 1141.8,526.8 1146.5,524.5 1150,520.5 1153.5,525.6 1155.9,535 1158.2,544.5 1160.6,548 1163,548.7 1164.8,532.7 1167.7,532.7 1171.2,539.8 1172.8,549.2 1173.6,568" fill="none" stroke="#00ff00" stroke-width="1.15" stroke-linejoin="round"/><polyline points="1216,582.5 1217.1,561 1218.3,542.1 1220.7,528 1224.2,523.3 1228.9,519.7 1231.3,512.7 1234.8,510.3 1241.9,510.3 1246.6,515 1250.1,518.6 1253.6,519.7 1257.2,526.8 1261.9,530.3 1266.6,535 1269.4,530.3 1270.8,516.2" fill="none" stroke="#00ff00" stroke-width="1.15" stroke-linejoin="round"/><polyline points="0,380.4 1,340 3.4,321.5 5.8,293 7,234 7.7,220 8.6,217.9 18.7,217.9 20.4,220 21.6,246 22.7,267 25.8,278 29.3,293 31.7,303.5 34,313 36.4,320 37.6,333 41.1,344 47,348 52.9,350.3 115,350.3 116,349.5 251.4,349.9 258.5,353.4 266.4,358.2 277.9,359.3 315.9,359.6 323.8,364.9 330.9,375.5 338.8,389.6 343.3,403.8 348.6,409 350.3,415.8 357.4,420 366.2,425 373.2,428.4 380.2,432 389,432.3 392.6,433.4 405,431.6 412,432.3 417.3,431.2 427.9,432.3 438.5,432.3 449,434.6 459.7,436.9 470.3,437.3 477.3,435.5 482.6,434.6 491.5,437.3 498.5,442.6 505.6,447.9 512.7,449.6 526.8,447 540.9,445.2 546.2,448.2 556.8,448.7 559,450.5 564.3,454.9 569.6,458.4 575.8,457 582,463.4 585.5,463 588.1,456.7 592.6,455 597.9,453.1 601.4,456.3 608.4,455.3 613.7,460.2 619,462 622.6,469 626.1,470.5 636.7,469.4 642,467.3 649,464.1 657,468.2 662.3,466.4 666.7,469.4 672,467.3 677.3,471.2 680.9,471.7 685.3,475.2 687.9,475.2 693.2,470.5 700.3,471.2 702.9,466.4 711.8,461.1 715.3,464.6 719.7,466.4 723.2,464.6 728.5,466.9 735.6,469 738.2,471.2 740.9,479.6 742.4,480.7 743.6,458.3 744.9,421 746.2,383.7 747.1,365 748.6,346.3 751.4,339.8 755.1,337.4 758.9,336.6 761.7,338.9 763.5,348.2 766.3,363.1 770.1,379.9 772.9,393 775.7,406.1 778.5,419.1 780.9,435.9 782.2,445.3 785,448.1 787.8,458.3 791.5,460.2 795.2,460.5 799.6,474 812,474 814.6,469.5 820.8,468.8 824.3,466.5 834,465.6 840.2,468.2 844.6,474 849.9,475.3 858.8,475.3 862.3,481.5 864.9,486.8 866.7,495.6 869,505 872,507.5 875.5,489.4 884.4,489.4 887,483.2 889.7,472.6 893.2,468.8 897.6,468.8 900.3,471.2 904.7,472.6 908.2,485 910.9,485.9 913.5,474.4 917,469.1 923.2,465.6 926.7,464.2 931.2,465.9 935.6,462.4 939.1,464.7 942.6,470.5 947.1,477 949.7,485 952.4,488.5 955.9,481.1 960.3,485 963,493 964.7,505 967,506 969,499 973.5,486.8 976.2,477.9 979.7,474.4 985,470.9 990.3,467 996.5,465.6 1000,467.3 1006.2,473.5 1011.5,477.6 1015,474.4 1018.6,473.5 1021.2,478.8 1023.9,483.2 1026.5,480.6 1029.9,473.8 1038.1,471.5 1046.4,471.5 1049.9,463.7 1051.8,464.4 1054.6,471.5 1061.7,471.5 1069.9,468.6 1078.2,471 1085.2,468.6 1092.3,466 1097,470.3 1101.7,469.1 1106.4,464.9 1112.3,462 1120.6,463.7 1125.3,466.8 1131.2,473.1 1135.9,472.6 1138.9,469.6 1142.9,475 1147.6,478.1 1153.5,478.5 1158.2,481.4 1161.8,487.5 1165.3,488 1168.1,480.4 1171.2,476.2 1177.1,471.5 1184.2,466.8 1188.9,467.2 1193.6,465.6 1200.6,467.9 1206.5,466 1212.4,469.1 1219.5,466 1224.2,464.4 1228.9,467.9 1234.8,475 1239.5,478.5 1243,485.6 1245.4,497.4 1247.7,503.3 1250.1,502 1253.6,490.3 1257.2,476.2 1260.7,469.1 1265.4,460.9 1270.1,456.2 1271,455" fill="none" stroke="#ff0000" stroke-width="1.15" stroke-linejoin="round"/><path d="M242.5 0V583" stroke="#fff" stroke-width="1" fill="none"/><path d="M78.5 27.5 H10.5 V73.5 H184.5 V27.5 H118" transform="translate(0,500)" stroke="#0000ff" stroke-width="1" fill="none"/></svg>
<div class="t " style="left:556px;top:140px;font-family:'Liberation Mono',monospace;font-weight:bold;font-size:13px;line-height:15px;height:15px;color:#ff0000;">0.19507km</div>
<div class="t " style="left:391px;top:640px;font-family:'Liberation Mono',monospace;font-weight:bold;font-size:15px;line-height:17px;height:17px;color:#0000ff;letter-spacing:-0.3px;">Pass</div>
<div class="t " style="left:336px;top:663px;font-family:'Liberation Mono',monospace;font-weight:bold;font-size:15px;line-height:17px;height:17px;color:#fff;">Fault Event: 0</div>
<div class="" style="left:311px;top:704px;width:1272px;height:17px;background:#f8f8f8;background-image:repeating-conic-gradient(#fff 0 25%,#f0f0f0 0 50%);background-size:2px 2px;"></div>
<div class="btn" style="left:311px;top:704px;width:17px;height:17px;"></div>
<div class="btn" style="left:1566px;top:704px;width:17px;height:17px;"></div>
<svg style="left:316px;top:708px" width="5" height="9" viewBox="0 0 5 9"><path d="M4.5 0.5 L4.5 8.5 L0.5 4.5 Z" fill="#808080"/></svg>
<svg style="left:1572px;top:708px" width="5" height="9" viewBox="0 0 5 9"><path d="M0.5 0.5 L0.5 8.5 L4.5 4.5 Z" fill="#808080"/></svg>
<div class="" style="left:1583px;top:121px;width:17px;height:583px;background:#f8f8f8;background-image:repeating-conic-gradient(#fff 0 25%,#f0f0f0 0 50%);background-size:2px 2px;"></div>
<div class="btn" style="left:1583px;top:121px;width:17px;height:17px;"></div>
<div class="btn" style="left:1583px;top:687px;width:17px;height:17px;"></div>
<svg style="left:1587px;top:127px" width="9" height="5" viewBox="0 0 9 5"><path d="M0.5 4.5 L8.5 4.5 L4.5 0.5 Z" fill="#a0a0a0"/></svg>
<svg style="left:1587px;top:693px" width="9" height="5" viewBox="0 0 9 5"><path d="M0.5 0.5 L8.5 0.5 L4.5 4.5 Z" fill="#808080"/></svg>
<div class="sunk" style="left:311px;top:724px;width:65px;height:16px;"></div>
<div class="t r" style="left:312px;top:727px;width:62px;">0.00000</div>
<div class="sunk" style="left:378px;top:724px;width:19px;height:16px;"></div>
<div class="t " style="left:379px;top:727px;">km</div>
<div class="sunk" style="left:413px;top:724px;width:60px;height:16px;"></div>
<div class="t r" style="left:414px;top:727px;width:58px;">28.087 dB</div>
<div class="sunk" style="left:886px;top:724px;width:60px;height:16px;"></div>
<div class="t r" style="left:887px;top:727px;width:57.5px;">0.10257</div>
<div class="sunk" style="left:948px;top:724px;width:42px;height:16px;"></div>
<div class="t " style="left:949px;top:727px;letter-spacing:-0.3px;">km/Div</div>
<div class="btn" style="left:992px;top:724px;width:27px;height:27px;"></div>
<div class="btn" style="left:1021px;top:724px;width:27px;height:27px;"></div>
<svg style="left:997px;top:730px" width="17" height="17" viewBox="0 0 17 17"><path d="M9.5 9.5 L15 15" stroke="#000080" stroke-width="3.2" stroke-linecap="round"/><path d="M10 10 L14.8 14.8" stroke="#5a78e0" stroke-width="1.2" stroke-linecap="round"/><circle cx="6.5" cy="6.5" r="5" fill="#e8f4f4" stroke="#222" stroke-width="1.3"/><path d="M6.5 3.5 V9.5 M3.5 6.5 H9.5" stroke="#008080" stroke-width="2"/></svg>
<svg style="left:1025px;top:729px" width="17" height="17" viewBox="0 0 17 17"><path d="M10.5 10.5 L15.5 15.5" stroke="#fff" stroke-width="3" stroke-linecap="round"/><path d="M9.5 9.5 L14.5 14.5" stroke="#a0a0a0" stroke-width="3" stroke-linecap="round"/><circle cx="6.5" cy="6.5" r="5" fill="#a8a8a8" stroke="#a0a0a0" stroke-width="1.2"/></svg>
<div class="sunk" style="left:1425px;top:724px;width:30px;height:16px;"></div>
<div class="t " style="left:1429.5px;top:727px;letter-spacing:-0.3px;">SMP:</div>
<div class="sunk" style="left:1456px;top:724px;width:40px;height:16px;"></div>
<div class="t " style="left:1458px;top:727px;">1m</div>
<div class="sunk" style="left:1498px;top:724px;width:65px;height:16px;"></div>
<div class="t r" style="left:1499px;top:727px;width:62.5px;">1.02566</div>
<div class="sunk" style="left:1565px;top:724px;width:18px;height:16px;"></div>
<div class="t " style="left:1566px;top:727px;">km</div>
<div class="btn" style="left:1604px;top:122px;width:28px;height:27px;"></div>
<div class="btn" style="left:1634px;top:122px;width:28px;height:27px;"></div>
<svg style="left:1609px;top:127px" width="17" height="17" viewBox="0 0 17 17"><path d="M9.5 9.5 L15 15" stroke="#000080" stroke-width="3.2" stroke-linecap="round"/><path d="M10 10 L14.8 14.8" stroke="#5a78e0" stroke-width="1.2" stroke-linecap="round"/><circle cx="6.5" cy="6.5" r="5" fill="#e8f4f4" stroke="#222" stroke-width="1.3"/><path d="M6.5 3.5 V9.5 M3.5 6.5 H9.5" stroke="#008080" stroke-width="2"/></svg>
<svg style="left:1639px;top:127px" width="17" height="17" viewBox="0 0 17 17"><path d="M10.5 10.5 L15.5 15.5" stroke="#fff" stroke-width="3" stroke-linecap="round"/><path d="M9.5 9.5 L14.5 14.5" stroke="#a0a0a0" stroke-width="3" stroke-linecap="round"/><circle cx="6.5" cy="6.5" r="5" fill="#a8a8a8" stroke="#a0a0a0" stroke-width="1.2"/></svg>
<div class="btn" style="left:1604px;top:150px;width:58px;height:26px;"></div>
<svg style="left:1608px;top:153px" width="50" height="21" viewBox="0 0 50 21" shape-rendering="crispEdges"><rect x="0.5" y="0.5" width="47" height="19" fill="#f0f0f0" stroke="#000"/><path d="M1 3.5 L34 10.5 M34.5 4 V19" stroke="#0000ff" fill="none" shape-rendering="auto"/><path d="M35.5 11 V19M37.5 13 V19M39.5 10 V19M41.5 12 V19M43.5 11 V19M45.5 13 V19M47.5 10 V19" stroke="#0000ff" fill="none"/><path d="M2 10.5 H46 M2 10.5 L6 7 M2 10.5 L6 14 M46 10.5 L42 7 M46 10.5 L42 14 M24 2 V19 M24 2 L21 6 M24 2 L27 6 M24 19 L21 15 M24 19 L27 15" stroke="#000" fill="none" shape-rendering="auto"/></svg>
<div class="btn" style="left:1604px;top:213px;width:28px;height:27px;"></div>
<div class="btn" style="left:1634px;top:213px;width:28px;height:27px;"></div>
<svg style="left:1604px;top:213px" width="28" height="27" viewBox="0 0 28 27"><circle cx="13.5" cy="12.2" r="8.5" fill="none" stroke="#000" stroke-width="1"/><path d="M13.5 20.7 V23" stroke="#000"/><text x="13.5" y="17.1" font-family="Liberation Serif" font-weight="bold" font-size="14.5" text-anchor="middle" fill="#000">1</text></svg>
<svg style="left:1634px;top:213px" width="28" height="27" viewBox="0 0 28 27"><path d="M3.1 3 L10.6 10 L17.9 3 M10.6 10 V21.5" fill="none" stroke="#000" stroke-width="1"/><text x="15.2" y="20.8" font-family="Liberation Serif" font-weight="bold" font-size="15" text-anchor="middle" fill="#000">1</text></svg>
<div class="btn" style="left:1604px;top:240px;width:28px;height:27px;"></div>
<div class="btn" style="left:1634px;top:240px;width:28px;height:27px;"></div>
<svg style="left:1604px;top:240px" width="28" height="27" viewBox="0 0 28 27"><circle cx="13.5" cy="12.2" r="8.5" fill="none" stroke="#000" stroke-width="1"/><path d="M13.5 20.7 V23" stroke="#000"/><text x="13.5" y="17.1" font-family="Liberation Serif" font-weight="bold" font-size="14.5" text-anchor="middle" fill="#000">2</text></svg>
<svg style="left:1634px;top:240px" width="28" height="27" viewBox="0 0 28 27"><path d="M3.1 3 L10.6 10 L17.9 3 M10.6 10 V21.5" fill="none" stroke="#000" stroke-width="1"/><text x="15.2" y="20.8" font-family="Liberation Serif" font-weight="bold" font-size="15" text-anchor="middle" fill="#000">2</text></svg>
<div class="btn" style="left:1604px;top:267px;width:28px;height:27px;"></div>
<div class="btn" style="left:1634px;top:267px;width:28px;height:27px;"></div>
<svg style="left:1604px;top:267px" width="28" height="27" viewBox="0 0 28 27"><circle cx="13.5" cy="12.2" r="8.5" fill="none" stroke="#000" stroke-width="1"/><path d="M13.5 20.7 V23" stroke="#000"/><text x="13.5" y="17.1" font-family="Liberation Serif" font-weight="bold" font-size="14.5" text-anchor="middle" fill="#000">3</text></svg>
<svg style="left:1634px;top:267px" width="28" height="27" viewBox="0 0 28 27"><path d="M3.1 3 L10.6 10 L17.9 3 M10.6 10 V21.5" fill="none" stroke="#000" stroke-width="1"/><text x="15.2" y="20.8" font-family="Liberation Serif" font-weight="bold" font-size="15" text-anchor="middle" fill="#000">3</text></svg>
<div class="btn" style="left:1604px;top:321px;width:58px;height:26px;"></div>
<div class="t c" style="left:1604px;top:328px;width:57px;color:#a0a0a0;text-shadow:1px 1px 0 #fff;">Cancel</div>
<div class="btn" style="left:1604px;top:348px;width:58px;height:26px;"></div>
<div class="t c" style="left:1604px;top:355px;width:57px;color:#a0a0a0;text-shadow:1px 1px 0 #fff;">Apply</div>
<div class="btn" style="left:1604px;top:451px;width:58px;height:57px;"></div>
<svg style="left:1604px;top:451px" width="58" height="57" viewBox="0 0 58 57" shape-rendering="crispEdges"><rect x="24" y="11" width="24" height="34" fill="#a0a0a0"/><rect x="20.5" y="9.5" width="24" height="33" fill="#fff" stroke="#a0a0a0"/><path d="M27 11.5 H39 M35 13.5 H41 M35 15.5 H41 M37 28.5 H41 M37 40.5 H41" stroke="#a0a0a0"/><rect x="34.5" y="18.5" width="7" height="7" fill="#f0f0f0" stroke="#a0a0a0"/><rect x="34.5" y="30.5" width="7" height="7" fill="#f0f0f0" stroke="#a0a0a0"/><path d="M36 20 L37 22 L41 25 M35 35 H38 V32 M38 35 L41 37" stroke="#a0a0a0" fill="none" shape-rendering="auto"/><rect x="10" y="13" width="25" height="36" fill="#fff"/><rect x="10" y="13" width="24" height="35" fill="#a0a0a0"/><rect x="15" y="18" width="14" height="8" fill="#f4f4f4"/><path d="M16 20.5 H27" stroke="#a0a0a0" stroke-width="2" stroke-dasharray="2 1"/><path d="M21 23 H26 M21 25 H27" stroke="#a0a0a0" stroke-dasharray="1 1"/></svg>
<div class="" style="left:1px;top:766px;width:1340px;height:232px;background:#1c1c1c;border-radius:5px 5px 0 0;"></div>
<div class="" style="left:2px;top:767px;width:1338px;height:230px;background:#43d3f3;border-radius:4px 4px 0 0;"></div>
<div class="" style="left:2px;top:767px;width:1337px;height:229px;background:#eef3fa;border-radius:4px 4px 0 0;"></div>
<div class="" style="left:3px;top:768px;width:1336px;height:228px;background:#b9d1ea;border-radius:3px 3px 0 0;"></div>
<div class="" style="left:3px;top:768px;width:1336px;height:28px;background:linear-gradient(#98b3d3 0%,#a3bcd9 35%,#b4cae4 75%,#bdd2ea 100%);border-radius:3px 3px 0 0;"></div>
<div class="t " style="left:31px;top:778px;font-size:12px;line-height:14px;height:14px;color:#000;transform:scaleX(0.93);transform-origin:0 0;">Event List</div>
<div class="capbtn a" style="left:1235px;top:776px;width:30px;height:17px;"></div>
<div class="capbtn a" style="left:1268px;top:776px;width:30px;height:17px;"></div>
<div class="capbtn a" style="left:1301px;top:776px;width:30px;height:17px;"></div>
<div class="" style="left:1245px;top:784px;width:11px;height:5px;background:#f4f4f4;border:1px solid #4d5566;border-radius:1px;"></div>
<div class="" style="left:1278px;top:780px;width:11px;height:9px;background:#f4f4f4;border:1px solid #4d5566;border-radius:1.5px;"></div>
<div class="" style="left:1280.5px;top:782.5px;width:6px;height:4px;background:transparent;border:1px solid #4d5566;"></div>
<svg style="left:1310px;top:779px" width="13" height="11" viewBox="0 0 13 11"><path d="M2.5 2 L10.5 9 M10.5 2 L2.5 9" stroke="#4d5566" stroke-width="5" stroke-linecap="butt"/><path d="M2.5 2 L10.5 9 M10.5 2 L2.5 9" stroke="#f0f0f0" stroke-width="3" stroke-linecap="butt"/></svg>
<div class="" style="left:10px;top:797px;width:1322px;height:192px;background:#fff;border:1px solid;border-color:#6a6a6a #fff #fff #6a6a6a;"></div>
<div class="" style="left:11px;top:798px;width:1320px;height:18px;background:#f0f0f0;"></div>
<div class="hdr" style="left:11px;top:798px;width:60px;height:17px;"></div>
<div class="t " style="left:16px;top:801px;letter-spacing:-0.2px;">Event No.</div>
<div class="hdr" style="left:71px;top:798px;width:74px;height:17px;"></div>
<div class="t " style="left:76px;top:801px;letter-spacing:-0.2px;">Distance(km)</div>
<div class="hdr" style="left:145px;top:798px;width:83px;height:17px;"></div>
<div class="t " style="left:150px;top:801px;letter-spacing:-0.2px;">Splice Loss(dB)</div>
<div class="hdr" style="left:228px;top:798px;width:90px;height:17px;"></div>
<div class="t " style="left:233px;top:801px;letter-spacing:-0.2px;">Return Loss(dB)</div>
<div class="hdr" style="left:318px;top:798px;width:109px;height:17px;"></div>
<div class="t " style="left:323px;top:801px;letter-spacing:-0.2px;">Cumulative Loss(dB)</div>
<div class="hdr" style="left:427px;top:798px;width:75px;height:17px;"></div>
<div class="t " style="left:432px;top:801px;letter-spacing:-0.2px;">Slope(dB/km)</div>
<div class="hdr" style="left:502px;top:798px;width:68px;height:17px;"></div>
<div class="t " style="left:507px;top:801px;letter-spacing:-0.2px;">Event Type</div>
<div class="hdr" style="left:570px;top:798px;width:72px;height:17px;"></div>
<div class="t r" style="left:570px;top:801px;width:65px;">IOR</div>
<div class="hdr" style="left:642px;top:798px;width:61px;height:17px;"></div>
<div class="t " style="left:647px;top:801px;letter-spacing:-0.2px;">Comment</div>
<div class="hdr" style="left:703px;top:798px;width:630px;height:17px;"></div>
<div class="" style="left:11px;top:815px;width:1320px;height:1px;background:#696969;"></div>
<div class="" style="left:11px;top:830px;width:1320px;height:1px;background:#f0f0f0;"></div>
<div class="" style="left:11px;top:844px;width:1320px;height:1px;background:#f0f0f0;"></div>
<div class="" style="left:11px;top:858px;width:1320px;height:1px;background:#f0f0f0;"></div>
<div class="" style="left:11px;top:872px;width:1320px;height:1px;background:#f0f0f0;"></div>
<div class="" style="left:11px;top:886px;width:1320px;height:1px;background:#f0f0f0;"></div>
<div class="" style="left:11px;top:900px;width:1320px;height:1px;background:#f0f0f0;"></div>
<div class="" style="left:11px;top:914px;width:1320px;height:1px;background:#f0f0f0;"></div>
<div class="" style="left:11px;top:928px;width:1320px;height:1px;background:#f0f0f0;"></div>
<div class="" style="left:11px;top:942px;width:1320px;height:1px;background:#f0f0f0;"></div>
<div class="" style="left:11px;top:956px;width:1320px;height:1px;background:#f0f0f0;"></div>
<div class="" style="left:11px;top:970px;width:1320px;height:1px;background:#f0f0f0;"></div>
<div class="" style="left:11px;top:984px;width:1320px;height:1px;background:#f0f0f0;"></div>
<div class="" style="left:70px;top:816px;width:1px;height:172px;background:#f0f0f0;"></div>
<div class="" style="left:144px;top:816px;width:1px;height:172px;background:#f0f0f0;"></div>
<div class="" style="left:227px;top:816px;width:1px;height:172px;background:#f0f0f0;"></div>
<div class="" style="left:317px;top:816px;width:1px;height:172px;background:#f0f0f0;"></div>
<div class="" style="left:426px;top:816px;width:1px;height:172px;background:#f0f0f0;"></div>
<div class="" style="left:501px;top:816px;width:1px;height:172px;background:#f0f0f0;"></div>
<div class="" style="left:569px;top:816px;width:1px;height:172px;background:#f0f0f0;"></div>
<div class="" style="left:641px;top:816px;width:1px;height:172px;background:#f0f0f0;"></div>
<div class="" style="left:702px;top:816px;width:1px;height:172px;background:#f0f0f0;"></div>
<div class="" style="left:25px;top:817px;width:678px;height:13px;background:#3399ff;"></div>
<div class="" style="left:70px;top:817px;width:1px;height:13px;background:#fff;"></div>
<div class="" style="left:144px;top:817px;width:1px;height:13px;background:#fff;"></div>
<div class="" style="left:227px;top:817px;width:1px;height:13px;background:#fff;"></div>
<div class="" style="left:317px;top:817px;width:1px;height:13px;background:#fff;"></div>
<div class="" style="left:426px;top:817px;width:1px;height:13px;background:#fff;"></div>
<div class="" style="left:501px;top:817px;width:1px;height:13px;background:#fff;"></div>
<div class="" style="left:569px;top:817px;width:1px;height:13px;background:#fff;"></div>
<div class="" style="left:641px;top:817px;width:1px;height:13px;background:#fff;"></div>
<div class="" style="left:25px;top:817px;width:678px;height:13px;border:1px dotted #e07820;border-bottom:none;"></div>
<div class="" style="left:13px;top:817px;width:12px;height:12px;background:#99ccff;"></div>
<svg style="left:13px;top:818px" width="12" height="12" viewBox="0 0 12 12" shape-rendering="crispEdges"><path d="M1 0.5 H6.5 V9.5 H11" stroke="#003366" fill="none"/></svg>
<div class="t " style="left:27.5px;top:818px;color:#fff;letter-spacing:-0.8px;transform:scaleX(.93);transform-origin:0 0;">1</div>
<div class="t r" style="left:71px;top:818px;width:67px;color:#fff;">0.19507</div>
<div class="t r" style="left:145px;top:818px;width:76px;color:#fff;">0.890</div>
<div class="t r" style="left:228px;top:818px;width:83px;color:#fff;">---.---</div>
<div class="t r" style="left:318px;top:818px;width:102px;color:#fff;">-0.026</div>
<div class="t r" style="left:427px;top:818px;width:68px;color:#fff;">-0.170</div>
<div class="t " style="left:507px;top:818px;color:#fff;">S+</div>
<div class="t r" style="left:570px;top:818px;width:65px;color:#fff;">1.46000</div>
<div class="" style="left:13px;top:831px;width:12px;height:12px;background:#fff;border:1px solid #d8d8d8;"></div>
<svg style="left:13px;top:831px" width="12" height="12" viewBox="0 0 12 12" shape-rendering="crispEdges"><path d="M1 0.5 H6.5 V9.5 H11" stroke="#000" fill="none"/></svg>
<div class="t " style="left:26.5px;top:832px;color:#000;letter-spacing:-0.8px;transform:scaleX(.93);transform-origin:0 0;">END</div>
<div class="t r" style="left:71px;top:832px;width:67px;color:#000;">0.25770</div>
<div class="t r" style="left:145px;top:832px;width:76px;color:#000;">---.---</div>
<div class="t r" style="left:228px;top:832px;width:83px;color:#000;">---.---</div>
<div class="t r" style="left:318px;top:832px;width:102px;color:#000;">1.195</div>
<div class="t r" style="left:427px;top:832px;width:68px;color:#000;">5.281</div>
<div class="t " style="left:507px;top:832px;color:#000;">S+</div>
<div class="t r" style="left:570px;top:832px;width:65px;color:#000;">1.46000</div>
<svg style="left:12px;top:776px" width="15" height="17" viewBox="0 0 15 17" shape-rendering="crispEdges"><path d="M0.5 0.5 H9.5 L13.5 4.5 V15.5 H0.5 Z" fill="#fff" stroke="#008000"/><path d="M1 15.5 H14 M13.5 5 V16" stroke="#000"/><path d="M9.5 0.5 V4.5 H13.5" stroke="#008000" fill="none"/><path d="M2 3.5 H9 M2 5.5 H12 M2 7.5 H12 M2 9.5 H12 M2 11.5 H12 M2 13.5 H12" stroke="#000"/></svg>
<div class="" style="left:1341px;top:766px;width:336px;height:232px;background:#474747;border-radius:5px 5px 0 0;"></div>
<div class="" style="left:1342px;top:767px;width:334px;height:230px;background:#f4f8fc;border-radius:4px 4px 0 0;"></div>
<div class="" style="left:1342px;top:767px;width:333px;height:229px;background:#eef3fa;border-radius:4px 4px 0 0;"></div>
<div class="" style="left:1343px;top:768px;width:332px;height:228px;background:#d9e6f3;border-radius:3px 3px 0 0;"></div>
<div class="" style="left:1343px;top:768px;width:332px;height:28px;background:linear-gradient(#bccbdc 0%,#c2d1e1 35%,#d1dfed 75%,#d9e6f3 100%);border-radius:3px 3px 0 0;"></div>
<div class="t " style="left:1371px;top:778px;font-size:12px;line-height:14px;height:14px;color:#5e6577;transform:scaleX(0.975);transform-origin:0 0;">Whole Trace</div>
<div class="capbtn" style="left:1571px;top:776px;width:30px;height:17px;"></div>
<div class="capbtn" style="left:1604px;top:776px;width:30px;height:17px;"></div>
<div class="capbtn" style="left:1637px;top:776px;width:30px;height:17px;"></div>
<div class="" style="left:1581px;top:784px;width:11px;height:5px;background:#f4f4f4;border:1px solid #4d5566;border-radius:1px;"></div>
<div class="" style="left:1614px;top:780px;width:11px;height:9px;background:#f4f4f4;border:1px solid #4d5566;border-radius:1.5px;"></div>
<div class="" style="left:1616.5px;top:782.5px;width:6px;height:4px;background:transparent;border:1px solid #4d5566;"></div>
<svg style="left:1646px;top:779px" width="13" height="11" viewBox="0 0 13 11"><path d="M2.5 2 L10.5 9 M10.5 2 L2.5 9" stroke="#4d5566" stroke-width="5" stroke-linecap="butt"/><path d="M2.5 2 L10.5 9 M10.5 2 L2.5 9" stroke="#f0f0f0" stroke-width="3" stroke-linecap="butt"/></svg>
<div class="" style="left:1349px;top:797px;width:319px;height:192px;background:#808080;border:1px solid;border-color:#6a6a6a #fff #fff #6a6a6a;"></div>
<svg style="left:1350px;top:798px" width="317" height="190" viewBox="0 0 317 190" shape-rendering="crispEdges"><polyline points="1.5,124.6 2.3,94.1 3.5,72.5 5.8,71.3 6.9,76.3 8.4,94.1 10.4,106.8 12.4,113.2 14.2,114.5 64.3,114.5 67.6,117 79,117 81.6,119.5 85.4,128.4 88.7,136 91.7,138.6 95.5,141.1 109.5,141.1 112,142.4 117.1,142.9 119.7,141.9 123.5,142.9 126,145.5 128.6,147 132.4,145.7 136.2,145.5 140,147 142.5,150 145.1,151.3 147.6,148.8 151.4,148.2 154,150.5 156.5,153.1 160.3,153.1 164.1,152 167.9,153.1 171.8,155.1 175.6,153.8 178.1,151.3 181.9,152.6 184.5,153.1 185.7,157.1 186.5,139.9 187.5,111.9 189.5,110.1 190.8,113.2 192.8,124.6 194.6,137.3 196.4,147.5 198.4,151.3 201,155.1 204.8,152 209.9,152 212.4,155.6 214.4,157.1 216.2,165.8 218.8,162.7 222.6,153.8 225.1,153.1 227.1,158.9 230.2,153.1 234,151.3 237.3,156.4 239.1,161.5 240.9,165.3 242.9,158.9 245.4,153.8 249.2,152 253.1,156.4 255.6,157.1 258.1,153.8 262,151.3 264.5,153.8 268.3,153.1 272.1,152.6 277.2,151.3 281,152 284.8,155.1 287.4,156.4 289.9,158.9 293.7,153.8 296.3,152 300.1,153.1 303.9,152 307.7,154.6 311,164 312.8,158.9 315.3,150.5" fill="none" stroke="#ff0000" stroke-width="1.15"/><path d="M61.5 0 V190" stroke="#fff"/></svg>
<div class="" style="left:1351px;top:778px;width:16px;height:11px;background:#000;border:1px solid #fff;"></div>
<div class="" style="left:0px;top:998px;width:1677px;height:21px;background:#f0f0f0;"></div>
<div class="" style="left:0px;top:998px;width:1677px;height:1px;background:#fff;"></div>
<div class="t " style="left:1.5px;top:1003px;font-size:12px;line-height:14px;height:14px;transform:scaleX(.91);transform-origin:0 0;">Ready</div>
<div class="" style="left:1561px;top:1001px;width:15px;height:18px;border:1px solid;border-color:#a0a0a0 #fff #fff #a0a0a0;"></div>
<div class="" style="left:1579px;top:1001px;width:28px;height:18px;border:1px solid;border-color:#a0a0a0 #fff #fff #a0a0a0;"></div>
<div class="" style="left:1610px;top:1001px;width:34px;height:18px;border:1px solid;border-color:#a0a0a0 #fff #fff #a0a0a0;"></div>
<div class="" style="left:1646px;top:1001px;width:31px;height:18px;border:1px solid;border-color:#a0a0a0 #fff #fff #a0a0a0;"></div>
<div class="t " style="left:1613px;top:1003px;font-size:12px;line-height:14px;height:14px;transform:scaleX(.97);transform-origin:0 0;">NUM</div>
<div class="" style="left:13px;top:1014px;width:26px;height:30px;border-radius:50%;border:1.5px solid #2c5d8c;background:radial-gradient(ellipse at 50% 0,#dfeaf5,#8fb3d6 60%);"></div>
</body></html>
